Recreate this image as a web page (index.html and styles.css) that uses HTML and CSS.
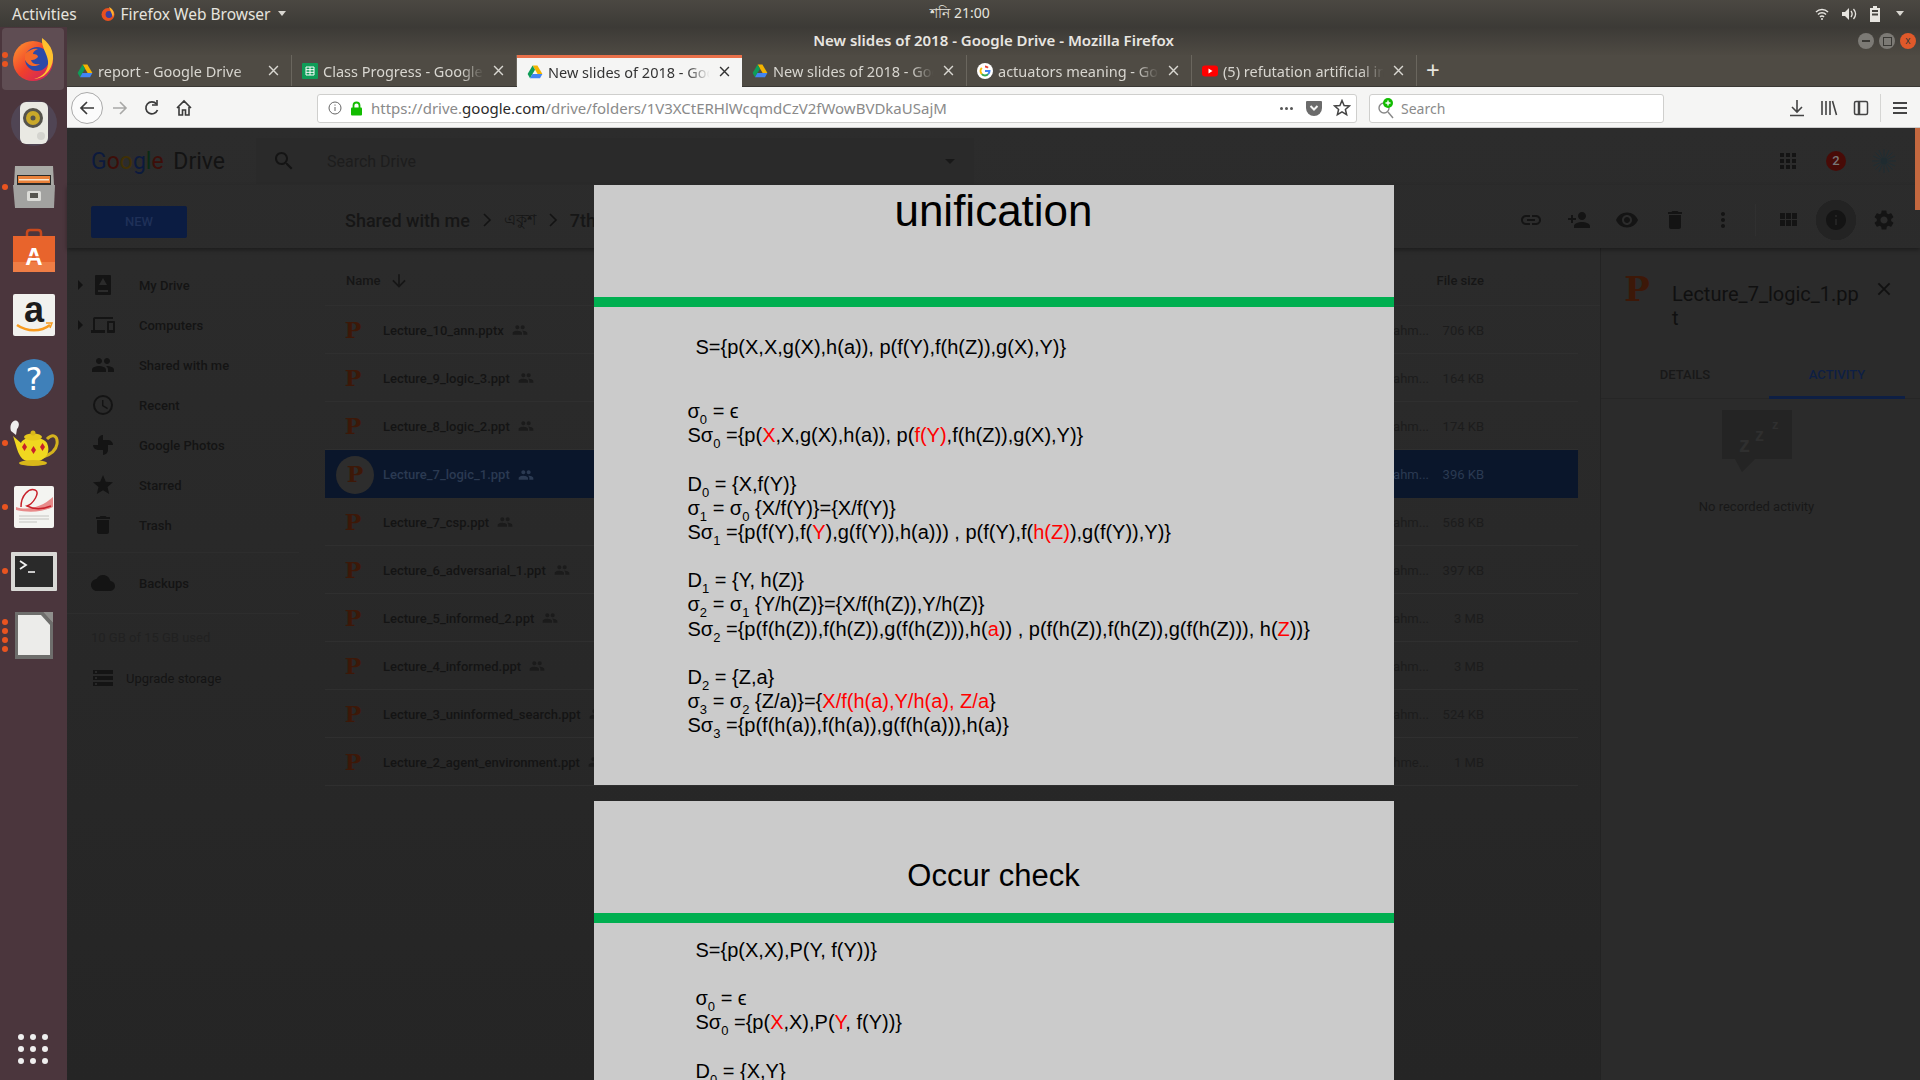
FILE: index.html
```html
<!DOCTYPE html>
<html lang="en">
<head>
    <meta charset="UTF-8">
    <title>New slides of 2018 - Google Drive - Mozilla Firefox</title>
    <link rel="stylesheet" href="styles.css">
</head>
<body>
    <svg class="sprite" width="0" height="0">
        <symbol id="i-people" viewBox="0 0 24 24"><path d="M16 11c1.66 0 2.99-1.34 2.99-3S17.66 5 16 5c-1.66 0-3 1.34-3 3s1.34 3 3 3zm-8 0c1.66 0 2.99-1.34 2.99-3S9.66 5 8 5C6.34 5 5 6.34 5 8s1.34 3 3 3zm0 2c-2.33 0-7 1.17-7 3.5V19h14v-2.5c0-2.33-4.67-3.5-7-3.5zm8 0c-.29 0-.62.02-.97.05 1.16.84 1.97 1.97 1.97 3.45V19h6v-2.5c0-2.33-4.67-3.5-7-3.5z"/></symbol>
        <symbol id="i-trash" viewBox="0 0 24 24"><path d="M6 19c0 1.1.9 2 2 2h8c1.1 0 2-.9 2-2V7H6v12zM19 4h-3.5l-1-1h-5l-1 1H5v2h14V4z"/></symbol>
        <symbol id="i-drive" viewBox="0 0 16 16"><path fill="#f4b400" d="M5.6 1.5h4.8l5 8.6h-4.8z"/><path fill="#0f9d58" d="M5.6 1.5 .6 10.1 3 14.3l5-8.6z"/><path fill="#4285f4" d="M3 14.3h10l2.4-4.2H5.4z"/></symbol>
        <symbol id="i-close" viewBox="0 0 10 10"><path d="M1 1l8 8M9 1l-8 8" fill="none" stroke="currentColor" stroke-width="1.3"/></symbol>
    </svg>

    <div class="topbar">
        <div class="topbar-left">
            <span>Activities</span>
            <span class="app-menu">
                <svg class="tiny-fox" viewBox="0 0 16 16"><circle cx="8" cy="8.5" r="6.5" fill="#e8501f"/><circle cx="9" cy="8.5" r="3.4" fill="#3a3f9e"/><path d="M9 1c4 2 6 6 4 10l-2-5z" fill="#ffb52e"/></svg>
                Firefox Web Browser <i class="caret"></i>
            </span>
        </div>
        <div class="clock">শনি 21:00</div>
        <div class="tray">
            <svg width="14" height="14" viewBox="0 0 14 14" fill="none" stroke="#e6e4df" stroke-width="1.5"><path d="M1 5a8.5 8.5 0 0 1 12 0M3 7.5a5.5 5.5 0 0 1 8 0M5 10a2.6 2.6 0 0 1 4 0"/><circle cx="7" cy="12" r="1" fill="#e6e4df" stroke="none"/></svg>
            <svg width="16" height="14" viewBox="0 0 16 14" fill="#e6e4df"><path d="M1 5h3l4-4v12l-4-4H1z"/><path d="M10 4c1.5 2 1.5 4 0 6M12.5 2c2.5 3 2.5 7 0 10" fill="none" stroke="#e6e4df" stroke-width="1.3"/></svg>
            <svg width="12" height="16" viewBox="0 0 12 16"><path d="M4 0h4v2h3v14H1V2h3z" fill="#e6e4df"/><path d="M3 4h6v2H3zM3 7.5h6v2H3z" fill="#45433e"/></svg>
            <i class="caret"></i>
        </div>
    </div>

    <div class="desktop">
        <nav class="dock">
            <div class="dock-item active">
                <span class="pips"><i></i><i></i></span>
                <svg width="46" height="46" viewBox="0 0 46 46">
                    <defs><linearGradient id="fx" x1="0" y1="0" x2="1" y2="1"><stop offset="0" stop-color="#ff9a2e"/><stop offset=".5" stop-color="#f0402c"/><stop offset="1" stop-color="#c81e6a"/></linearGradient></defs>
                    <circle cx="22" cy="25" r="20" fill="url(#fx)"/>
                    <circle cx="26" cy="23" r="12" fill="#2c49a8"/>
                    <path d="M31 2c10 7 14 18 9 29-3 7-10 12-17 12 9-2 15-9 14-18-1-8-7-14-6-23z" fill="#ffc02e"/>
                    <path d="M14 18c4-4 9-6 13-5-3 1-5 3-5 5 3 0 5 1 5 3-3 3-5 3-7 3 1 4 5 5 9 4-5 4-12 2-15-4z" fill="#f4692a"/>
                </svg>
            </div>
            <div class="dock-item">
                <svg width="50" height="46" viewBox="0 0 50 46">
                    <circle cx="25" cy="23" r="23" fill="#5d6a90" opacity=".28"/>
                    <rect x="11" y="2" width="28" height="42" rx="6" fill="#e9e9e3"/>
                    <circle cx="24" cy="18" r="10" fill="#55534c"/>
                    <circle cx="24" cy="18" r="7" fill="#c9a82a"/>
                    <circle cx="24" cy="18" r="2.5" fill="#55534c"/>
                    <circle cx="32" cy="36" r="4" fill="#d4d4cf"/>
                </svg>
            </div>
            <div class="dock-item">
                <span class="pips"><i></i></span>
                <svg width="44" height="44" viewBox="0 0 44 44">
                    <path d="M3 1h38l1 19H2z" fill="#a9a9a5"/>
                    <rect x="5" y="10" width="34" height="10" fill="#2b2a28"/>
                    <rect x="6" y="11" width="32" height="7" fill="#e9813a"/>
                    <rect x="7" y="14" width="30" height="1.5" fill="#f6e5d0"/>
                    <path d="M1 20h42l-1 23H3z" fill="#a2a2a0"/>
                    <rect x="15" y="26" width="14" height="10" rx="1.5" fill="#dcdcd8"/>
                    <rect x="18" y="28" width="8" height="5" fill="#55544f"/>
                </svg>
            </div>
            <div class="dock-item">
                <svg class="bag" width="44" height="44" viewBox="0 0 44 44">
                    <path d="M15 10V5q0-3 3-3h8q3 0 3 3v5" fill="none" stroke="#c8491d" stroke-width="2.5"/>
                    <path d="M1 8h42v36H1z" fill="#e8642c"/>
                    <path d="M1 34h42v10H1z" fill="#ef7d45"/>
                    <text x="22" y="37" class="bag-letter">A</text>
                    <path d="M13 29h18" stroke="#e8642c" stroke-width="1.5"/>
                </svg>
            </div>
            <div class="dock-item">
                <svg width="44" height="44" viewBox="0 0 44 44">
                    <rect x="1" y="1" width="42" height="42" rx="2" fill="#f1f1ee"/>
                    <text x="22" y="29" class="amazon-letter">a</text>
                    <path d="M5 32c10 7 24 7 33 0" fill="none" stroke="#f79a1e" stroke-width="2.5"/>
                    <path d="M34 30l6 0-2 5" fill="none" stroke="#f79a1e" stroke-width="1.5"/>
                </svg>
            </div>
            <div class="dock-item">
                <svg width="42" height="42" viewBox="0 0 42 42">
                    <circle cx="21" cy="21" r="20" fill="#3f80b9"/>
                    <text x="21" y="32" class="help-letter">?</text>
                </svg>
            </div>
            <div class="dock-item">
                <span class="pips"><i></i></span>
                <svg width="50" height="48" viewBox="0 0 50 48">
                    <path d="M2 12c-2-6 2-12 6-10 3 2 2 6 0 8l-1 6z" fill="#eee"/>
                    <path d="M38 20c6-6 11-3 10 5-1 7-8 11-14 13" fill="none" stroke="#d4b21e" stroke-width="3"/>
                    <path d="M4 17l8 7c2-7 22-7 26 0 4 9-1 16-8 18H18C9 40 8 28 4 17z" fill="#f0d820"/>
                    <ellipse cx="24" cy="18" rx="9" ry="3.5" fill="#e6c81c"/>
                    <circle cx="24" cy="14" r="2.5" fill="#d9b81a"/>
                    <path d="M13 28l2.5-4 2.5 4-2.5 4zM22 31l2.5-4 2.5 4-2.5 4zM31 28l2.5-4 2.5 4-2.5 4z" fill="#c8202a"/>
                    <ellipse cx="24" cy="44" rx="14" ry="3" fill="#d9b81a"/>
                </svg>
            </div>
            <div class="dock-item">
                <span class="pips"><i></i></span>
                <svg width="42" height="44" viewBox="0 0 42 44">
                    <rect x="1" y="1" width="40" height="42" rx="2" fill="#f4f4f1"/>
                    <path d="M3 22c12 4 26 0 37-10v10c-10 5-24 6-37 3z" fill="#e88a8a"/>
                    <path d="M8 22C8 10 16 3 22 5s-2 14-8 16c6 3 14 4 24 0" fill="none" stroke="#c8202a" stroke-width="1.5"/>
                    <path d="M6 31h30M6 34h30M6 37h18" stroke="#c4c4c0"/>
                </svg>
            </div>
            <div class="dock-item">
                <span class="pips"><i></i></span>
                <svg width="46" height="39" viewBox="0 0 46 39">
                    <rect width="46" height="39" rx="1" fill="#d9d9d6"/>
                    <rect x="4" y="4" width="38" height="31" fill="#2a2a2a"/>
                    <path d="M9 9l6 4-6 4" fill="none" stroke="#f2f2f2" stroke-width="1.8"/>
                    <path d="M17 20h7" stroke="#f2f2f2" stroke-width="1.6"/>
                </svg>
            </div>
            <div class="dock-item">
                <span class="pips"><i></i><i></i><i></i><i></i></span>
                <svg width="40" height="48" viewBox="0 0 40 48">
                    <path d="M1 1h28l10 11v36H1z" fill="#6e6e6c"/>
                    <path d="M29 1h10v11z" fill="#8f8f8c"/>
                    <path d="M4 4h23l9 10v30H4z" fill="#ececea"/>
                </svg>
            </div>
            <div class="dock-grid">
                <i></i><i></i><i></i><i></i><i></i><i></i><i></i><i></i><i></i>
            </div>
        </nav>

        <div class="window">
            <div class="titlebar">
                <span class="window-title">New slides of 2018 - Google Drive - Mozilla Firefox</span>
                <span class="window-btns"><i class="win-min"></i><i class="win-max"></i><i class="win-close">x</i></span>
            </div>

            <div class="tabstrip">
                <div class="tab">
                    <svg class="tab-icon"><use href="#i-drive"/></svg>
                    <span class="tab-text">report - Google Drive</span>
                    <svg class="tab-x"><use href="#i-close"/></svg>
                </div>
                <div class="tab">
                    <svg class="tab-icon" viewBox="0 0 16 16"><rect width="16" height="16" rx="1" fill="#0f9d58"/><path d="M4 4h8v8H4zM4 6.7h8M4 9.3h8M8 4v8" fill="none" stroke="#fff"/></svg>
                    <span class="tab-text">Class Progress - Google Sheets</span>
                    <svg class="tab-x"><use href="#i-close"/></svg>
                </div>
                <div class="tab tab-active">
                    <svg class="tab-icon"><use href="#i-drive"/></svg>
                    <span class="tab-text">New slides of 2018 - Google Drive</span>
                    <svg class="tab-x"><use href="#i-close"/></svg>
                </div>
                <div class="tab">
                    <svg class="tab-icon"><use href="#i-drive"/></svg>
                    <span class="tab-text">New slides of 2018 - Google Drive</span>
                    <svg class="tab-x"><use href="#i-close"/></svg>
                </div>
                <div class="tab">
                    <svg class="tab-icon" viewBox="0 0 16 16"><circle cx="8" cy="8" r="8" fill="#fff"/><path d="M8 3.5a4.5 4.5 0 0 1 3 1.2" fill="none" stroke="#ea4335" stroke-width="2"/><path d="M4.8 4.9a4.5 4.5 0 0 0 0 6.2" fill="none" stroke="#fbbc05" stroke-width="2"/><path d="M4.8 11.1a4.5 4.5 0 0 0 6.4 0" fill="none" stroke="#34a853" stroke-width="2"/><path d="M8 8h4.5a4.5 4.5 0 0 1-1.3 3.1" fill="none" stroke="#4285f4" stroke-width="2"/></svg>
                    <span class="tab-text">actuators meaning - Google Search</span>
                    <svg class="tab-x"><use href="#i-close"/></svg>
                </div>
                <div class="tab">
                    <svg class="tab-icon" viewBox="0 0 16 16"><rect y="2.5" width="16" height="11" rx="3" fill="#f00"/><path d="M6.5 5.5l4 2.5-4 2.5z" fill="#fff"/></svg>
                    <span class="tab-text">(5) refutation artificial intelligence</span>
                    <svg class="tab-x"><use href="#i-close"/></svg>
                </div>
                <span class="tab-new">+</span>
            </div>

            <div class="toolbar">
                <span class="nav-back">
                    <svg width="18" height="18" viewBox="0 0 18 18" fill="none" stroke="#3a3a3a" stroke-width="1.7"><path d="M16 9H3M9 3L3 9l6 6"/></svg>
                </span>
                <span class="nav-btn">
                    <svg width="18" height="18" viewBox="0 0 18 18" fill="none" stroke="#a8a8a6" stroke-width="1.6"><path d="M2 9h13M9 3l6 6-6 6"/></svg>
                </span>
                <span class="nav-btn">
                    <svg width="18" height="18" viewBox="0 0 18 18" fill="none" stroke="#3a3a3a" stroke-width="1.7"><path d="M14.5 11a6 6 0 1 1-1-6"/><path d="M14 1v5H9" stroke-width="1.6"/></svg>
                </span>
                <span class="nav-btn">
                    <svg width="18" height="18" viewBox="0 0 18 18" fill="none" stroke="#3a3a3a" stroke-width="1.6"><path d="M2 9l7-7 7 7M4 8v8h3.5v-5h3v5H14V8"/></svg>
                </span>
                <div class="urlbar">
                    <svg width="14" height="14" viewBox="0 0 14 14" fill="none" stroke="#666"><circle cx="7" cy="7" r="6"/><path d="M7 6v4M7 3.5v1.2"/></svg>
                    <svg class="lock" width="13" height="15" viewBox="0 0 13 15"><path d="M3.5 7V4.5a3 3 0 0 1 6 0V7" fill="none" stroke="#12bc00" stroke-width="1.8"/><rect x="1" y="6.5" width="11" height="8" rx="1" fill="#12bc00"/></svg>
                    <span class="url-text">https://drive.<b>google.com</b>/drive/folders/1V3XCtERHlWcqmdCzV2fWowBVDkaUSajM</span>
                    <span class="url-dots"><i></i><i></i><i></i></span>
                    <svg width="18" height="18" viewBox="0 0 18 18"><path d="M2 2h14q1 0 1 1v6a8 8 0 0 1-16 0V3q0-1 1-1z" fill="#6b6b6b"/><path d="M5.5 7L9 10.5 12.5 7" fill="none" stroke="#f5f5f4" stroke-width="2"/></svg>
                    <svg class="url-star" width="18" height="18" viewBox="0 0 24 24" fill="none" stroke="#444" stroke-width="2"><path d="M12 17.27L18.18 21l-1.64-7.03L22 9.24l-7.19-.61L12 2 9.19 8.63 2 9.24l5.46 4.73L5.82 21z"/></svg>
                </div>
                <div class="searchbar">
                    <svg width="20" height="22" viewBox="0 0 20 22"><circle cx="8" cy="11" r="5" fill="none" stroke="#888" stroke-width="1.4"/><path d="M12 15l5 6" stroke="#888" stroke-width="1.4"/><circle cx="12" cy="6" r="5" fill="#12bc00"/><path d="M12 3.5v5M9.5 6h5" stroke="#fff" stroke-width="1.4"/></svg>
                    <span>Search</span>
                </div>
                <span class="tool-btn">
                    <svg width="16" height="18" viewBox="0 0 16 18" fill="none" stroke="#444" stroke-width="1.6"><path d="M8 1v11M3 8l5 5 5-5M1 16.5h14"/></svg>
                </span>
                <span class="tool-btn">
                    <svg width="18" height="16" viewBox="0 0 18 16" fill="none" stroke="#444" stroke-width="1.6"><path d="M2 1v14M6 1v14M10 1v14M12.5 1l4 14"/></svg>
                </span>
                <span class="tool-btn">
                    <svg width="16" height="16" viewBox="0 0 16 16" fill="none" stroke="#444" stroke-width="1.5"><rect x="1.5" y="1.5" width="13" height="13" rx="1.5"/><path d="M6 2v12" stroke-width="2.5"/></svg>
                </span>
                <span class="tool-sep"></span>
                <span class="tool-btn">
                    <svg width="16" height="14" viewBox="0 0 16 14" stroke="#444" stroke-width="1.8"><path d="M1 2h14M1 7h14M1 12h14"/></svg>
                </span>
            </div>

            <div class="content">
                <div class="drive-top">
                    <div class="logo"><span class="g-blue">G</span><span class="g-red">o</span><span class="g-yellow">o</span><span class="g-blue">g</span><span class="g-green">l</span><span class="g-red">e</span> <span class="logo-word">Drive</span></div>
                    <div class="drive-search">
                        <svg class="d-icon" viewBox="0 0 24 24"><path d="M15.5 14h-.79l-.28-.27C15.41 12.59 16 11.11 16 9.5 16 5.91 13.09 3 9.5 3S3 5.91 3 9.5 5.91 16 9.5 16c1.61 0 3.09-.59 4.23-1.57l.27.28v.79l5 4.99L20.49 19l-4.99-5zm-6 0C7.01 14 5 11.99 5 9.5S7.01 5 9.5 5 14 7.01 14 9.5 11.99 14 9.5 14z"/></svg>
                        <span class="search-hint">Search Drive</span>
                        <i class="search-caret"></i>
                    </div>
                    <div class="top-actions">
                        <svg class="d-icon" viewBox="0 0 24 24"><path d="M4 8h4V4H4v4zm6 12h4v-4h-4v4zm-6 0h4v-4H4v4zm0-6h4v-4H4v4zm6 0h4v-4h-4v4zm6-10v4h4V4h-4zm-6 4h4V4h-4v4zm6 6h4v-4h-4v4zm0 6h4v-4h-4v4z"/></svg>
                        <span class="badge">2</span>
                        <svg class="d-icon" viewBox="0 0 24 24" fill="none" stroke="#1e2e34" stroke-width=".9"><path d="M12 0v24M0 12h24M3.5 3.5l17 17M20.5 3.5l-17 17M7 1l10 22M17 1L7 23M1 7l22 10M23 7L1 17"/><circle cx="12" cy="12" r="3" fill="#1f2b30" stroke="none"/></svg>
                    </div>
                </div>

                <div class="drive-sub">
                    <div class="new-btn">NEW</div>
                    <div class="crumbs">
                        <span>Shared with me</span>
                        <svg class="crumb-arrow" viewBox="0 0 10 16"><path d="M2 2l6 6-6 6" fill="none" stroke="#131313" stroke-width="1.6"/></svg>
                        <span class="crumb-bn">একুশ</span>
                        <svg class="crumb-arrow" viewBox="0 0 10 16"><path d="M2 2l6 6-6 6" fill="none" stroke="#131313" stroke-width="1.6"/></svg>
                        <span>7th</span>
                    </div>
                    <div class="sub-actions">
                        <span class="act"><svg class="d-icon" viewBox="0 0 24 24"><path d="M3.9 12c0-1.71 1.39-3.1 3.1-3.1h4V7H7c-2.76 0-5 2.24-5 5s2.24 5 5 5h4v-1.9H7c-1.71 0-3.1-1.39-3.1-3.1zM8 13h8v-2H8v2zm9-6h-4v1.9h4c1.71 0 3.1 1.39 3.1 3.1s-1.39 3.1-3.1 3.1h-4V17h4c2.76 0 5-2.24 5-5s-2.24-5-5-5z"/></svg></span>
                        <span class="act"><svg class="d-icon" viewBox="0 0 24 24"><path d="M15 12c2.21 0 4-1.79 4-4s-1.79-4-4-4-4 1.79-4 4 1.79 4 4 4zm-9-2V7H4v3H1v2h3v3h2v-3h3v-2H6zm9 4c-2.67 0-8 1.34-8 4v2h16v-2c0-2.66-5.33-4-8-4z"/></svg></span>
                        <span class="act"><svg class="d-icon" viewBox="0 0 24 24"><path d="M12 4.5C7 4.5 2.73 7.61 1 12c1.73 4.39 6 7.5 11 7.5s9.27-3.11 11-7.5c-1.73-4.39-6-7.5-11-7.5zM12 17c-2.76 0-5-2.24-5-5s2.24-5 5-5 5 2.24 5 5-2.24 5-5 5zm0-8c-1.66 0-3 1.34-3 3s1.34 3 3 3 3-1.34 3-3-1.34-3-3-3z"/></svg></span>
                        <span class="act"><svg class="d-icon"><use href="#i-trash"/></svg></span>
                        <span class="act"><svg class="d-icon" viewBox="0 0 24 24"><path d="M12 8c1.1 0 2-.9 2-2s-.9-2-2-2-2 .9-2 2 .9 2 2 2zm0 2c-1.1 0-2 .9-2 2s.9 2 2 2 2-.9 2-2-.9-2-2-2zm0 6c-1.1 0-2 .9-2 2s.9 2 2 2 2-.9 2-2-.9-2-2-2z"/></svg></span>
                        <span class="act-sep"></span>
                        <span class="act"><svg class="d-icon" viewBox="0 0 24 24"><path d="M4 11h5V5H4v6zm0 7h5v-6H4v6zm6 0h5v-6h-5v6zm6 0h5v-6h-5v6zm-6-7h5V5h-5v6zm6-6v6h5V5h-5z"/></svg></span>
                        <span class="act act-on"><svg class="d-icon" viewBox="0 0 24 24"><path d="M12 2C6.48 2 2 6.48 2 12s4.48 10 10 10 10-4.48 10-10S17.52 2 12 2zm1 15h-2v-6h2v6zm0-8h-2V7h2v2z"/></svg></span>
                        <span class="act"><svg class="d-icon" viewBox="0 0 24 24"><path d="M19.14 12.94c.04-.3.06-.61.06-.94 0-.32-.02-.64-.07-.94l2.03-1.58a.49.49 0 0 0 .12-.61l-1.92-3.32a.488.488 0 0 0-.59-.22l-2.39.96c-.5-.38-1.03-.7-1.62-.94l-.36-2.54a.484.484 0 0 0-.48-.41h-3.84c-.24 0-.43.17-.47.41l-.36 2.54c-.59.24-1.13.57-1.62.94l-2.39-.96c-.22-.08-.47 0-.59.22L2.74 8.87c-.12.21-.08.47.12.61l2.03 1.58c-.05.3-.09.63-.09.94s.02.64.07.94l-2.03 1.58a.49.49 0 0 0-.12.61l1.92 3.32c.12.22.37.29.59.22l2.39-.96c.5.38 1.03.7 1.62.94l.36 2.54c.05.24.24.41.48.41h3.84c.24 0 .44-.17.47-.41l.36-2.54c.59-.24 1.13-.56 1.62-.94l2.39.96c.22.08.47 0 .59-.22l1.92-3.32c.12-.22.07-.47-.12-.61l-2.01-1.58zM12 15.6c-1.98 0-3.6-1.62-3.6-3.6s1.62-3.6 3.6-3.6 3.6 1.62 3.6 3.6-1.62 3.6-3.6 3.6z"/></svg></span>
                    </div>
                </div>

                <div class="drive-body">
                    <aside class="sidebar">
                        <div class="side-item"><i class="side-caret"></i><svg class="d-icon" viewBox="0 0 24 24"><path d="M5 2h14a1 1 0 0 1 1 1v18a1 1 0 0 1-1 1H5a1 1 0 0 1-1-1V3a1 1 0 0 1 1-1zm2 15v2h10v-2zM12 5l-4 7h8z" fill-rule="evenodd"/></svg><span>My Drive</span></div>
                        <div class="side-item"><i class="side-caret"></i><svg class="d-icon" viewBox="0 0 24 24"><path d="M4 6h18V4H4c-1.1 0-2 .9-2 2v11H0v3h14v-3H4V6zm19 2h-6c-.55 0-1 .45-1 1v10c0 .55.45 1 1 1h6c.55 0 1-.45 1-1V9c0-.55-.45-1-1-1zm-1 9h-4v-7h4v7z"/></svg><span>Computers</span></div>
                        <div class="side-item"><svg class="d-icon"><use href="#i-people"/></svg><span>Shared with me</span></div>
                        <div class="side-item"><svg class="d-icon" viewBox="0 0 24 24"><path d="M12 2a10 10 0 1 0 0 20 10 10 0 0 0 0-20zm0 18a8 8 0 1 1 0-16 8 8 0 0 1 0 16zm.5-13H11v6l5.2 3.2.8-1.2-4.5-2.7z"/></svg><span>Recent</span></div>
                        <div class="side-item"><svg class="d-icon" viewBox="0 0 24 24"><path d="M12 12V2a5 5 0 0 0-5 5v5zM12 12h10a5 5 0 0 0-5-5h-5zM12 12v10a5 5 0 0 0 5-5v-5zM12 12H2a5 5 0 0 0 5 5h5z"/></svg><span>Google Photos</span></div>
                        <div class="side-item"><svg class="d-icon" viewBox="0 0 24 24"><path d="M12 17.27L18.18 21l-1.64-7.03L22 9.24l-7.19-.61L12 2 9.19 8.63 2 9.24l5.46 4.73L5.82 21z"/></svg><span>Starred</span></div>
                        <div class="side-item"><svg class="d-icon"><use href="#i-trash"/></svg><span>Trash</span></div>
                        <div class="side-group">
                            <div class="side-item"><svg class="d-icon" viewBox="0 0 24 24"><path d="M19.35 10.04C18.67 6.59 15.64 4 12 4 9.11 4 6.6 5.64 5.35 8.04 2.34 8.36 0 10.91 0 14c0 3.31 2.69 6 6 6h13c2.76 0 5-2.24 5-5 0-2.64-2.05-4.78-4.65-4.96z"/></svg><span>Backups</span></div>
                        </div>
                        <div class="quota">10 GB of 15 GB used</div>
                        <div class="upgrade"><svg class="d-icon" viewBox="0 0 24 24"><path d="M2 20h20v-4H2v4zm2-3h2v2H4v-2zM2 4v4h20V4H2zm4 3H4V5h2v2zm-4 7h20v-4H2v4zm2-3h2v2H4v-2z"/></svg><span>Upgrade storage</span></div>
                    </aside>

                    <section class="filelist">
                        <div class="list-head">
                            <span class="head-name">Name</span>
                            <svg class="head-sort" viewBox="0 0 24 24"><path d="M20 12l-1.41-1.41L13 16.17V4h-2v12.17l-5.58-5.59L4 12l8 8 8-8z"/></svg>
                            <span class="head-size">File size</span>
                        </div>
                        <div class="row"><span class="ppt">P</span><span class="row-name">Lecture_10_ann.pptx</span><svg class="share"><use href="#i-people"/></svg><span class="row-owner">_ahm...</span><span class="row-size">706 KB</span></div>
                        <div class="row"><span class="ppt">P</span><span class="row-name">Lecture_9_logic_3.ppt</span><svg class="share"><use href="#i-people"/></svg><span class="row-owner">_ahm...</span><span class="row-size">164 KB</span></div>
                        <div class="row"><span class="ppt">P</span><span class="row-name">Lecture_8_logic_2.ppt</span><svg class="share"><use href="#i-people"/></svg><span class="row-owner">_ahm...</span><span class="row-size">174 KB</span></div>
                        <div class="row row-selected"><span class="ppt ppt-round">P</span><span class="row-name">Lecture_7_logic_1.ppt</span><svg class="share"><use href="#i-people"/></svg><span class="row-owner">_ahm...</span><span class="row-size">396 KB</span></div>
                        <div class="row"><span class="ppt">P</span><span class="row-name">Lecture_7_csp.ppt</span><svg class="share"><use href="#i-people"/></svg><span class="row-owner">_ahm...</span><span class="row-size">568 KB</span></div>
                        <div class="row"><span class="ppt">P</span><span class="row-name">Lecture_6_adversarial_1.ppt</span><svg class="share"><use href="#i-people"/></svg><span class="row-owner">_ahm...</span><span class="row-size">397 KB</span></div>
                        <div class="row"><span class="ppt">P</span><span class="row-name">Lecture_5_informed_2.ppt</span><svg class="share"><use href="#i-people"/></svg><span class="row-owner">_ahm...</span><span class="row-size">3 MB</span></div>
                        <div class="row"><span class="ppt">P</span><span class="row-name">Lecture_4_informed.ppt</span><svg class="share"><use href="#i-people"/></svg><span class="row-owner">_ahm...</span><span class="row-size">3 MB</span></div>
                        <div class="row"><span class="ppt">P</span><span class="row-name">Lecture_3_uninformed_search.ppt</span><svg class="share"><use href="#i-people"/></svg><span class="row-owner">_ahm...</span><span class="row-size">524 KB</span></div>
                        <div class="row"><span class="ppt">P</span><span class="row-name">Lecture_2_agent_environment.ppt</span><svg class="share"><use href="#i-people"/></svg><span class="row-owner">hme...</span><span class="row-size">1 MB</span></div>
                    </section>

                    <aside class="details">
                        <div class="details-head">
                            <span class="ppt ppt-big">P</span>
                            <span class="details-name">Lecture_7_logic_1.ppt</span>
                            <svg class="details-x"><use href="#i-close"/></svg>
                        </div>
                        <div class="details-tabs">
                            <span class="d-tab">DETAILS</span>
                            <span class="d-tab d-tab-on">ACTIVITY</span>
                        </div>
                        <div class="no-activity">
                            <svg width="70" height="62" viewBox="0 0 70 62">
                                <path d="M0 0h70v49H33l-13 13-7-13H0z" fill="#242424"/>
                                <text x="17" y="42" class="zz zz-1">z</text>
                                <text x="33" y="31" class="zz zz-2">z</text>
                                <text x="50" y="19" class="zz zz-3">z</text>
                            </svg>
                            <p>No recorded activity</p>
                        </div>
                    </aside>
                </div>

                <div class="viewer">
                    <article class="slide">
                        <h2 class="slide-title title-unification">unification</h2>
                        <div class="slide-rule"></div>
                        <div class="slide-body body-first">
                            <p class="lead">S={p(X,X,g(X),h(a)), p(f(Y),f(h(Z)),g(X),Y)}</p>
                            <p>σ<sub>0</sub> = ϵ<br>Sσ<sub>0</sub> ={p(<em>X</em>,X,g(X),h(a)), p(<em>f(Y)</em>,f(h(Z)),g(X),Y)}</p>
                            <p>D<sub>0</sub> = {X,f(Y)}<br>σ<sub>1</sub> = σ<sub>0</sub> {X/f(Y)}={X/f(Y)}<br>Sσ<sub>1</sub> ={p(f(Y),f(<em>Y</em>),g(f(Y)),h(a))) , p(f(Y),f(<em>h(Z)</em>),g(f(Y)),Y)}</p>
                            <p>D<sub>1</sub> = {Y, h(Z)}<br>σ<sub>2</sub> = σ<sub>1</sub> {Y/h(Z)}={X/f(h(Z)),Y/h(Z)}<br>Sσ<sub>2</sub> ={p(f(h(Z)),f(h(Z)),g(f(h(Z))),h(<em>a</em>)) , p(f(h(Z)),f(h(Z)),g(f(h(Z))), h(<em>Z</em>))}</p>
                            <p>D<sub>2</sub> = {Z,a}<br>σ<sub>3</sub> = σ<sub>2</sub> {Z/a)}={<em>X/f(h(a),Y/h(a), Z/a</em>}<br>Sσ<sub>3</sub> ={p(f(h(a)),f(h(a)),g(f(h(a))),h(a)}</p>
                        </div>
                    </article>
                    <article class="slide">
                        <h2 class="slide-title title-occur">Occur check</h2>
                        <div class="slide-rule"></div>
                        <div class="slide-body body-second">
                            <p>S={p(X,X),P(Y, f(Y))}</p>
                            <p>σ<sub>0</sub> = ϵ<br>Sσ<sub>0</sub> ={p(<em>X</em>,X),P(<em>Y</em>, f(Y))}</p>
                            <p>D<sub>0</sub> = {X,Y}</p>
                        </div>
                    </article>
                </div>
                <div class="page-scroll"></div>
            </div>
        </div>
    </div>
</body>
</html>
```

FILE: styles.css
```css
* {
    margin: 0;
    padding: 0;
    box-sizing: border-box;
}

body {
    width: 1920px;
    height: 1080px;
    overflow: hidden;
    font-family: "Noto Sans", sans-serif;
    background: #262626;
    display: flex;
    flex-direction: column;
}

.sprite {
    position: absolute;
}

i {
    font-style: normal;
}

/* Ubuntu top bar */
.topbar {
    height: 27px;
    flex: none;
    display: flex;
    align-items: center;
    justify-content: space-between;
    position: relative;
    padding: 0 12px;
    background: linear-gradient(#4b4842, #3c3a36);
    color: #e6e4df;
    font-size: 15.5px;
}

.topbar-left {
    display: flex;
    gap: 23px;
}

.app-menu {
    display: flex;
    align-items: center;
    gap: 5px;
}

.tiny-fox {
    width: 16px;
    height: 16px;
}

.caret {
    display: inline-block;
    border-left: 4px solid transparent;
    border-right: 4px solid transparent;
    border-top: 5px solid #d8d6d0;
    margin-left: 3px;
}

.clock {
    position: absolute;
    left: 0;
    right: 0;
    text-align: center;
    font-family: "Noto Sans", "DejaVu Sans", sans-serif;
    font-size: 14px;
}

.tray {
    display: flex;
    align-items: center;
    gap: 12px;
    margin-right: 4px;
}

/* Dock */
.desktop {
    flex: 1;
    display: flex;
    min-height: 0;
}

.dock {
    width: 67px;
    flex: none;
    display: flex;
    flex-direction: column;
    background: #4b363d;
}

.dock-item {
    height: 64px;
    flex: none;
    display: flex;
    align-items: center;
    justify-content: center;
    position: relative;
}

.dock-item.active {
    margin: 1px 3px 1px 2px;
    height: 62px;
    padding-left: 1px;
    border-radius: 4px;
    background: #5f4d53;
}

.pips {
    position: absolute;
    left: 2px;
    top: 0;
    bottom: 0;
    display: flex;
    flex-direction: column;
    justify-content: center;
    gap: 3px;
}

.dock-item.active .pips {
    left: 0;
}

.pips i {
    width: 6px;
    height: 6px;
    border-radius: 50%;
    background: #e95420;
}

.bag {
    margin-top: -3px;
}

.bag-letter {
    font: bold 24px "Liberation Sans", sans-serif;
    fill: #fff;
    text-anchor: middle;
}

.amazon-letter {
    font: bold 36px "Liberation Sans", sans-serif;
    fill: #1c1c1c;
    text-anchor: middle;
}

.help-letter {
    font: 32px "DejaVu Sans", sans-serif;
    fill: #fff;
    text-anchor: middle;
}

.dock-grid {
    margin-top: auto;
    margin-bottom: 16px;
    margin-left: 18px;
    display: grid;
    grid-template-columns: repeat(3, 6px);
    gap: 6px;
}

.dock-grid i {
    width: 6px;
    height: 6px;
    border-radius: 50%;
    background: #efefef;
}

/* Firefox window */
.window {
    flex: 1;
    min-width: 0;
    display: flex;
    flex-direction: column;
}

.titlebar {
    height: 28px;
    flex: none;
    display: flex;
    align-items: center;
    justify-content: center;
    position: relative;
    padding-bottom: 2px;
    background: linear-gradient(#3c3a36, #4e4a43);
}

.window-title {
    color: #e8e6e1;
    font-size: 15px;
    font-weight: 600;
}

.window-btns {
    position: absolute;
    right: 4px;
    top: 6px;
    display: flex;
    gap: 5px;
}

.window-btns i {
    width: 16px;
    height: 16px;
    border-radius: 50%;
    background: #7c7a75;
    color: #3a3935;
    font-size: 10px;
    line-height: 15px;
    text-align: center;
}

.window-btns .win-close {
    background: #e0592a;
}

.win-min::before {
    content: "";
    display: block;
    width: 8px;
    height: 2px;
    margin: 7px auto 0;
    background: #3a3935;
}

.win-max::before {
    content: "";
    display: block;
    width: 7px;
    height: 7px;
    margin: 4px auto 0;
    border: 1px solid #3a3935;
}

.tabstrip {
    height: 32px;
    flex: none;
    display: flex;
    background: #4f4b44;
    border-bottom: 1px solid #3a3834;
}

.tab {
    width: 225px;
    flex: none;
    display: flex;
    align-items: center;
    padding: 0 12px 0 10px;
    position: relative;
    color: #d8d6d0;
    border-right: 1px solid #6a665e;
}

.tab-icon {
    width: 16px;
    height: 16px;
    flex: none;
    margin-right: 5px;
}

.tab-text {
    flex: 1;
    overflow: hidden;
    white-space: nowrap;
    font-size: 14.5px;
    -webkit-mask-image: linear-gradient(to right, #000 84%, transparent 98%);
    mask-image: linear-gradient(to right, #000 84%, transparent 98%);
}

.tab-x {
    width: 11px;
    height: 11px;
    flex: none;
    margin-left: 6px;
}

.tab-active {
    height: 32px;
    background: #f5f5f4;
    color: #333;
    border-top: 3px solid #e9704a;
    border-right: none;
    padding-bottom: 2px;
}

.tab-new {
    margin-left: 9px;
    color: #e6e4df;
    font-size: 24px;
    line-height: 30px;
}

.toolbar {
    height: 41px;
    flex: none;
    display: flex;
    align-items: center;
    padding-top: 2px;
    background: #f5f5f4;
    border-bottom: 1px solid #ccc;
}

.nav-back {
    width: 32px;
    height: 32px;
    margin: 0 1px 0 4px;
    display: flex;
    align-items: center;
    justify-content: center;
    border: 1px solid #aaa;
    border-radius: 50%;
    background: #fbfbfb;
}

.nav-btn {
    width: 32px;
    display: flex;
    justify-content: center;
}

.urlbar {
    width: 1040px;
    height: 29px;
    margin-left: 117px;
    padding: 0 5px 0 10px;
    display: flex;
    align-items: center;
    gap: 8px;
    background: #fff;
    border: 1px solid #cfcfcd;
    border-radius: 3px;
}

.url-text {
    flex: 1;
    color: #8a8a8a;
    font-size: 15px;
    white-space: nowrap;
}

.url-text b {
    color: #2a2a2a;
    font-weight: 400;
}

.url-dots {
    display: flex;
    gap: 2px;
    margin-right: 4px;
}

.url-dots i {
    width: 3px;
    height: 3px;
    border-radius: 50%;
    background: #555;
}

.url-star {
    margin-left: 2px;
}

.searchbar {
    width: 295px;
    height: 29px;
    margin-left: 12px;
    padding-left: 6px;
    display: flex;
    align-items: center;
    gap: 5px;
    background: #fff;
    border: 1px solid #cfcfcd;
    border-radius: 3px;
    color: #8a8a8a;
    font-size: 14px;
}

.tool-btn {
    width: 32px;
    display: flex;
    justify-content: center;
}

.searchbar + .tool-btn {
    margin-left: 117px;
}

.tool-sep {
    width: 1px;
    height: 28px;
    margin: 0 3px;
    background: #d5d5d3;
}

/* Drive page, dimmed behind the slide viewer */
.content {
    flex: 1;
    min-height: 0;
    position: relative;
    display: flex;
    flex-direction: column;
    font-family: Roboto, sans-serif;
    color: #141414;
    background: linear-gradient(#2c2c2c, #252525);
}

.d-icon {
    width: 24px;
    height: 24px;
    flex: none;
    fill: #141414;
}

.drive-top {
    height: 57px;
    flex: none;
    display: flex;
    align-items: center;
    padding: 9px 24px 0;
}

.logo {
    width: 165px;
    font-size: 23px;
    white-space: nowrap;
}

.g-blue { color: #0c1a3d; }
.g-red { color: #3d0e09; }
.g-yellow { color: #403005; }
.g-green { color: #0a2b15; }

.logo-word {
    color: #131313;
    margin-left: 4px;
}

.drive-search {
    width: 718px;
    height: 46px;
    display: flex;
    align-items: center;
    position: relative;
    padding-left: 16px;
    background: #2a2a2a;
}

.search-hint {
    margin-left: 31px;
    color: #1d1d1d;
    font-size: 16px;
}

.search-caret {
    position: absolute;
    right: 19px;
    top: 21px;
    border-left: 5px solid transparent;
    border-right: 5px solid transparent;
    border-top: 5px solid #181818;
}

.top-actions {
    margin-left: auto;
    display: flex;
    align-items: center;
    gap: 24px;
}

.badge {
    width: 20px;
    height: 20px;
    margin: 0 2px;
    border-radius: 50%;
    background: #480b07;
    color: #777;
    font-size: 13px;
    font-weight: 500;
    line-height: 20px;
    text-align: center;
}

.drive-sub {
    height: 63px;
    flex: none;
    display: flex;
    align-items: center;
    padding: 11px 12px 0 24px;
    box-shadow: 0 2px 4px rgba(0, 0, 0, .35);
    position: relative;
}

.new-btn {
    width: 96px;
    height: 32px;
    border-radius: 2px;
    background: #0b1c42;
    color: #1f3058;
    font-size: 13px;
    font-weight: 500;
    line-height: 32px;
    text-align: center;
}

.crumbs {
    margin-left: 158px;
    margin-top: -4px;
    display: flex;
    align-items: center;
    gap: 12px;
    font-size: 18px;
    font-weight: 500;
    color: #161616;
    white-space: nowrap;
}

.crumb-bn {
    font-size: 16px;
}

.crumb-arrow {
    width: 10px;
    height: 16px;
}

.sub-actions {
    margin-left: auto;
    margin-top: -4px;
    display: flex;
    align-items: center;
}

.act {
    width: 48px;
    height: 40px;
    display: flex;
    align-items: center;
    justify-content: center;
}

.act-on {
    background: radial-gradient(circle, #232323 20px, transparent 20.5px);
}

.act-sep {
    width: 1px;
    height: 32px;
    margin: 0 8px;
    background: #303030;
}

.drive-body {
    flex: 1;
    min-height: 0;
    display: flex;
}

.sidebar {
    width: 258px;
    flex: none;
    padding-top: 17px;
}

.side-item {
    height: 40px;
    display: flex;
    align-items: center;
    position: relative;
    padding-left: 24px;
    gap: 24px;
    font-size: 13px;
    font-weight: 500;
}

.side-caret {
    position: absolute;
    left: 11px;
    top: 15px;
    border-top: 5px solid transparent;
    border-bottom: 5px solid transparent;
    border-left: 5px solid #131313;
}

.side-group {
    margin-top: 7px;
    padding: 10px 0;
    border-top: 1px solid #2d2d2d;
    border-bottom: 1px solid #2d2d2d;
    width: 232px;
}

.quota {
    margin: 16px 0 0 24px;
    color: #212121;
    font-size: 13px;
}

.upgrade {
    height: 40px;
    margin-top: 13px;
    padding-left: 24px;
    display: flex;
    align-items: center;
    gap: 11px;
    font-size: 13px;
}

.filelist {
    width: 1275px;
    flex: none;
}

.list-head {
    height: 58px;
    display: flex;
    align-items: center;
    padding: 8px 116px 0 21px;
    font-size: 13px;
    font-weight: 500;
    border-bottom: 1px solid #2f2f2f;
    color: #161616;
}

.head-sort {
    width: 20px;
    height: 20px;
    margin-left: 8px;
    fill: #161616;
}

.head-size {
    margin-left: auto;
}

.row {
    height: 48px;
    display: flex;
    align-items: center;
    position: relative;
    width: 1253px;
    padding: 1px 94px 0 58px;
    font-size: 13px;
    font-weight: 500;
    border-bottom: 1px solid #2f2f2f;
}

.ppt {
    position: absolute;
    left: 17px;
    width: 22px;
    text-align: center;
    font-family: "DejaVu Serif", serif;
    font-weight: 700;
    font-size: 22px;
    color: #3d1808;
}

.ppt-round {
    left: 11px;
    width: 38px;
    height: 38px;
    border-radius: 50%;
    background: #2d2d2d;
    line-height: 37px;
}

.row-selected {
    background: #0a162b;
    color: #2b3a52;
    border-bottom: none;
}

.share {
    width: 16px;
    height: 16px;
    margin-left: 8px;
    fill: #1b1b1b;
}

.row-selected .share {
    fill: #2b3a52;
}

.row-owner {
    margin-left: auto;
    width: 50px;
    text-align: right;
    font-weight: 400;
    color: #1c1c1c;
    white-space: nowrap;
}

.row-size {
    width: 55px;
    text-align: right;
    font-weight: 400;
    color: #1c1c1c;
}

.row-selected .row-owner,
.row-selected .row-size {
    color: #2b3a52;
}

.details {
    flex: 1;
    border-left: 1px solid #232323;
    background: #2b2b2b;
}

.details-head {
    height: 106px;
    position: relative;
    padding: 34px 0 0 71px;
}

.ppt-big {
    left: 23px;
    top: 21px;
    width: 26px;
    font-size: 34px;
}

.details-name {
    display: block;
    width: 190px;
    font-size: 20px;
    line-height: 24px;
    word-break: break-all;
    color: #101010;
}

.details-x {
    position: absolute;
    right: 29px;
    top: 34px;
    width: 14px;
    height: 14px;
    color: #111;
}

.details-tabs {
    height: 45px;
    display: flex;
    padding-left: 16px;
    border-bottom: 1px solid #262626;
    position: relative;
}

.d-tab {
    width: 136px;
    height: 45px;
    font-size: 13px;
    font-weight: 500;
    line-height: 42px;
    text-align: center;
    color: #181818;
}

.d-tab-on {
    margin-left: 16px;
    color: #0e1f44;
    border-bottom: 3px solid #0e1f44;
}

.no-activity {
    text-align: center;
    padding: 11px 8px 0 0;
    color: #181818;
    font-size: 13px;
}

.no-activity p {
    margin-top: 24px;
}

.zz {
    font-family: "Liberation Sans", sans-serif;
    font-weight: 700;
    fill: #2f2f2f;
}

.zz-1 { font-size: 22px; }
.zz-2 { font-size: 18px; }
.zz-3 { font-size: 13px; }

.page-scroll {
    position: absolute;
    right: 0;
    top: 0;
    width: 5px;
    height: 82px;
    background: #c4683f;
}

/* Slide viewer on top of the page */
.viewer {
    position: absolute;
    inset: 0;
    padding-top: 57px;
    display: flex;
    flex-direction: column;
    align-items: center;
    gap: 16px;
    overflow: hidden;
}

.slide {
    width: 800px;
    height: 600px;
    flex: none;
    background: #cbcbcb;
    color: #000;
    font-family: "Liberation Sans", Arial, sans-serif;
}

.slide-title {
    height: 112px;
    font-weight: 400;
    text-align: center;
}

.title-unification {
    padding-top: 1px;
    font-size: 44px;
    line-height: 50px;
}

.title-occur {
    padding-top: 57px;
    font-size: 31px;
    line-height: 36px;
}

.slide-rule {
    height: 10px;
    background: #00af50;
}

.slide-body {
    font-size: 20px;
    line-height: 24.15px;
}

.slide-body p {
    margin-bottom: 24.15px;
}

.slide-body sub {
    font-size: 13px;
    line-height: 0;
    vertical-align: -6px;
}

.slide-body em {
    font-style: normal;
    color: #f00;
}

.body-first {
    padding: 28px 0 0 94px;
}

.body-first .lead {
    margin: 0 0 40px 8px;
}

.body-second {
    padding: 15px 0 0 102px;
}
```
